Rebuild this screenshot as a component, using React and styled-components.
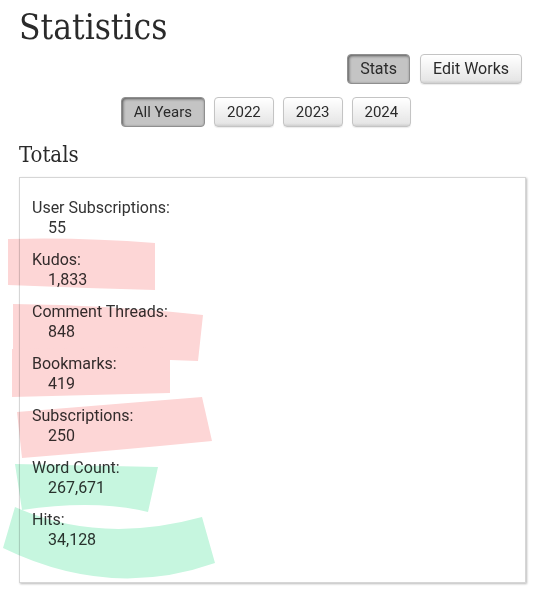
import styled, { createGlobalStyle } from 'styled-components'

const GlobalStyle = createGlobalStyle`
  html, body {
    margin: 0;
    padding: 0;
    background: #fff;
  }
  body {
    font-family: Roboto, "Liberation Sans", sans-serif;
    color: #2a2a2a;
  }
`

const Page = styled.div`
  position: relative;
  width: 540px;
  min-height: 597px;
  box-sizing: border-box;
  padding: 0 14px 0 19px;
`

const Title = styled.h2`
  margin: 5px 0 5px;
  font-family: "DejaVu Serif Condensed", "DejaVu Serif", serif;
  font-weight: normal;
  font-size: 35px;
  line-height: 44px;
  color: #2a2a2a;
`

const ActionRow = styled.ul`
  display: flex;
  justify-content: ${props => props.$align || 'flex-end'};
  gap: ${props => props.$gap || 10}px;
  list-style: none;
  margin: 0 0 13px;
  padding: 0 ${props => props.$pr || 0}px 0 0;
`

const Button = styled.li`
  box-sizing: border-box;
  padding: ${props => props.$small ? '4px 12px' : '4px 12px'};
  font-size: ${props => props.$small ? 15 : 16}px;
  line-height: 20px;
  color: #2a2a2a;
  border: 1px solid ${props => props.$current ? '#8f8f8f' : '#c4c4c4'};
  border-radius: 4px;
  background: ${props => props.$current
    ? '#c4c4c4'
    : 'linear-gradient(#fff 2%, #e6e6e6 90%, #cfcfcf 100%)'};
  box-shadow: ${props => props.$current
    ? 'inset 1px 1px 3px #555'
    : '0 1px 1px rgba(0,0,0,0.08)'};
`

const SectionTitle = styled.h3`
  margin: 14px 0 8px;
  font-family: "DejaVu Serif Condensed", "DejaVu Serif", serif;
  font-weight: normal;
  font-size: 22px;
  line-height: 28px;
  color: #2a2a2a;
`

const TotalsBox = styled.dl`
  margin: 0;
  padding: 20px 12px 20px;
  border: 1px solid #d6d6d6;
  box-shadow: 1px 1px 2px #bbb;
  background: #fff;
  font-size: 16px;
  line-height: 20px;
`

const Stat = styled.div`
  margin-bottom: 12px;
`

const Label = styled.dt`
  margin: 0;
  color: #333;
`

const Value = styled.dd`
  margin: 0 0 0 16px;
  color: #333;
`

const Highlights = styled.svg`
  position: absolute;
  top: 0;
  left: 0;
  width: 540px;
  height: 597px;
  pointer-events: none;
  mix-blend-mode: multiply;
`

const stats = [
  ['User Subscriptions:', '55'],
  ['Kudos:', '1,833'],
  ['Comment Threads:', '848'],
  ['Bookmarks:', '419'],
  ['Subscriptions:', '250'],
  ['Word Count:', '267,671'],
  ['Hits:', '34,128'],
]

const pink = [
  'M8,234 Q80,232 155,238 L155,285 Q80,283 8,280 Z',
  'M13,299 Q110,300 203,310 L198,356 Q100,352 13,352 Z',
  'M12,344 L170,342 L170,388 L12,392 Z',
  'M17,407 L202,392 L212,436 Q110,446 22,453 Z',
]

const green = [
  'M15,459 L158,462 L148,507 Q95,494 22,505 Z',
  'M15,502 Q100,540 202,512 L215,558 Q110,595 3,543 Z',
]

export default function App() {
  return (
    <Page>
      <GlobalStyle />
      <Title>Statistics</Title>
      <ActionRow $pr={4}>
        <Button $current>Stats</Button>
        <Button>Edit Works</Button>
      </ActionRow>
      <ActionRow $align="center" $gap={9} $pr={13}>
        <Button $small $current>All Years</Button>
        <Button $small>2022</Button>
        <Button $small>2023</Button>
        <Button $small>2024</Button>
      </ActionRow>
      <SectionTitle>Totals</SectionTitle>
      <TotalsBox>
        {stats.map(([label, value]) => (
          <Stat key={label}>
            <Label>{label}</Label>
            <Value>{value}</Value>
          </Stat>
        ))}
      </TotalsBox>
      <Highlights viewBox="0 0 540 597">
        {pink.map(d => <path key={d} d={d} fill="#fdd6d6" />)}
        {green.map(d => <path key={d} d={d} fill="#c6f6df" />)}
      </Highlights>
    </Page>
  )
}
